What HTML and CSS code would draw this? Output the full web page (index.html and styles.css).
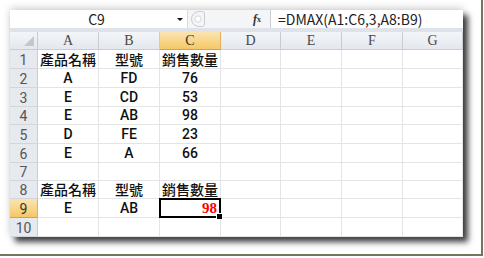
FILE: index.html
```html
<!DOCTYPE html>
<html lang="zh-Hant">
<head>
    <meta charset="UTF-8">
    <title>DMAX</title>
    <link rel="stylesheet" href="styles.css">
</head>
<body>
    <div class="frame">
        <div class="sheet">
            <div class="formula-bar">
                <div class="name-box">
                    <span class="name">C9</span>
                    <span class="caret"></span>
                </div>
                <div class="splitter"><span class="grip"></span></div>
                <div class="fx"><i>f</i><sub>x</sub></div>
                <div class="formula">=DMAX(A1:C6,3,A8:B9)</div>
            </div>

            <div class="grid">
                <div class="hd corner"><span class="tri"></span></div>
                <div class="hd col">A</div>
                <div class="hd col">B</div>
                <div class="hd col active">C</div>
                <div class="hd col">D</div>
                <div class="hd col">E</div>
                <div class="hd col">F</div>
                <div class="hd col">G</div>

                <div class="hd row">1</div>
                <div class="cell cjk">產品名稱</div><div class="cell cjk">型號</div><div class="cell cjk">銷售數量</div>
                <div class="cell"></div><div class="cell"></div><div class="cell"></div><div class="cell"></div>

                <div class="hd row">2</div>
                <div class="cell">A</div><div class="cell">FD</div><div class="cell">76</div>
                <div class="cell"></div><div class="cell"></div><div class="cell"></div><div class="cell"></div>

                <div class="hd row">3</div>
                <div class="cell">E</div><div class="cell">CD</div><div class="cell">53</div>
                <div class="cell"></div><div class="cell"></div><div class="cell"></div><div class="cell"></div>

                <div class="hd row">4</div>
                <div class="cell">E</div><div class="cell">AB</div><div class="cell">98</div>
                <div class="cell"></div><div class="cell"></div><div class="cell"></div><div class="cell"></div>

                <div class="hd row">5</div>
                <div class="cell">D</div><div class="cell">FE</div><div class="cell">23</div>
                <div class="cell"></div><div class="cell"></div><div class="cell"></div><div class="cell"></div>

                <div class="hd row">6</div>
                <div class="cell">E</div><div class="cell">A</div><div class="cell">66</div>
                <div class="cell"></div><div class="cell"></div><div class="cell"></div><div class="cell"></div>

                <div class="hd row">7</div>
                <div class="cell"></div><div class="cell"></div><div class="cell"></div>
                <div class="cell"></div><div class="cell"></div><div class="cell"></div><div class="cell"></div>

                <div class="hd row">8</div>
                <div class="cell cjk">產品名稱</div><div class="cell cjk">型號</div><div class="cell cjk">銷售數量</div>
                <div class="cell"></div><div class="cell"></div><div class="cell"></div><div class="cell"></div>

                <div class="hd row active">9</div>
                <div class="cell">E</div><div class="cell">AB</div><div class="cell selected"><span class="result">98</span></div>
                <div class="cell"></div><div class="cell"></div><div class="cell"></div><div class="cell"></div>

                <div class="hd row">10</div>
                <div class="cell"></div><div class="cell"></div><div class="cell"></div>
                <div class="cell"></div><div class="cell"></div><div class="cell"></div><div class="cell"></div>
            </div>
        </div>
    </div>
</body>
</html>
```

FILE: styles.css
```css
html, body {
    margin: 0;
    background: #fff;
}
body {
    font-family: "Noto Sans CJK TC", "Noto Sans", sans-serif;
    color: #111;
}
.frame {
    width: 471px;
    height: 244px;
    padding: 10px 0 0 10px;
    border-right: 2px solid #72765f;
    border-bottom: 2px solid #72765f;
    background: #fff;
}
.sheet {
    width: 453px;
    height: 227px;
    background: #fff;
    overflow: hidden;
    box-shadow: 5px 5px 6px rgba(0,0,0,0.75), 0 -2px 8px rgba(0,0,0,0.18);
}

/* formula bar */
.formula-bar {
    display: flex;
    height: 18px;
    border-bottom: 4px solid #dfe3e9;
    background: #fff;
}
.name-box {
    width: 177px;
    display: flex;
    align-items: center;
    border-right: 1px solid #d6d9de;
}
.name {
    flex: 1;
    text-align: center;
    font-size: 14px;
    line-height: 16px;
    color: #222;
    padding-left: 6px;
}
.caret {
    width: 0;
    height: 0;
    border-left: 3px solid transparent;
    border-right: 3px solid transparent;
    border-top: 3px solid #111;
    margin-right: 4px;
}
.splitter {
    width: 56px;
    display: flex;
    align-items: center;
    background: #f4f5f7;
}
.grip {
    width: 12px;
    height: 14px;
    margin-left: 3px;
    border: 1px solid #c9ccd2;
    border-radius: 8px 3px 3px 8px;
    background: radial-gradient(circle at 6px 7px, #fff 2px, #d6d9de 3px, transparent 4px);
}
.fx {
    width: 26px;
    font-family: "Liberation Serif", serif;
    font-size: 12px;
    font-weight: bold;
    color: #333;
    display: flex;
    align-items: center;
    justify-content: center;
    background: #f4f5f7;
    border-right: 1px solid #c9ccd2;
}
.fx sub {
    font-size: 8px;
    vertical-align: -1px;
}
.formula {
    flex: 1;
    padding-left: 7px;
    font-size: 14px;
    line-height: 18px;
    color: #222;
}

/* grid */
.grid {
    display: grid;
    grid-template-columns: 28px 61px 61px 61px 60px 61px 61px 60px;
    grid-template-rows: 18px 19px 19px 19px 18px 19px 19px 18px 18px 19px 19px;
}
.hd {
    display: flex;
    align-items: center;
    justify-content: center;
    font-family: "Liberation Serif", serif;
    font-size: 14px;
    color: #484848;
    background: linear-gradient(#f3f5f8, #e4e8ee);
    border-right: 1px solid #c8ccd3;
    border-bottom: 1px solid #c8ccd3;
    box-sizing: border-box;
}
.hd.row {
    background: #e6e9ee;
    font-family: Roboto, sans-serif;
    font-size: 14px;
    line-height: 16px;
    color: #555;
    border-bottom-color: #d2d6dc;
    padding-top: 1px;
}
.hd.corner {
    justify-content: flex-end;
    align-items: flex-end;
    padding: 0 3px 3px 0;
}
.tri {
    width: 0;
    height: 0;
    border-left: 10px solid transparent;
    border-bottom: 10px solid #c3c7ce;
}
.hd.active {
    background: linear-gradient(#fbe4b2, #f5c865);
    border-right-color: #e3b15c;
    border-bottom: 1px solid #f29436;
    color: #333;
}
.cell {
    display: flex;
    align-items: flex-end;
    justify-content: center;
    font-family: Roboto, "Noto Sans", sans-serif;
    font-size: 14px;
    font-weight: 500;
    line-height: 16px;
    border-right: 1px solid #e3e4e6;
    border-bottom: 1px solid #e3e4e6;
    box-sizing: border-box;
    padding-bottom: 1px;
}
.cell.cjk {
    font-family: "Noto Sans CJK TC", sans-serif;
    font-size: 14px;
}
.cell.selected {
    position: relative;
    justify-content: flex-end;
    padding-right: 3px;
}
.cell.selected::before {
    content: "";
    position: absolute;
    left: -1px;
    top: -1px;
    right: -1px;
    bottom: -1px;
    border: 2px solid #000;
}
.cell.selected::after {
    content: "";
    position: absolute;
    right: -3px;
    bottom: -3px;
    width: 5px;
    height: 5px;
    background: #000;
    border: 1px solid #fff;
}
.result {
    font-family: "Liberation Serif", serif;
    font-size: 15px;
    font-weight: bold;
    color: #f00;
}
```
